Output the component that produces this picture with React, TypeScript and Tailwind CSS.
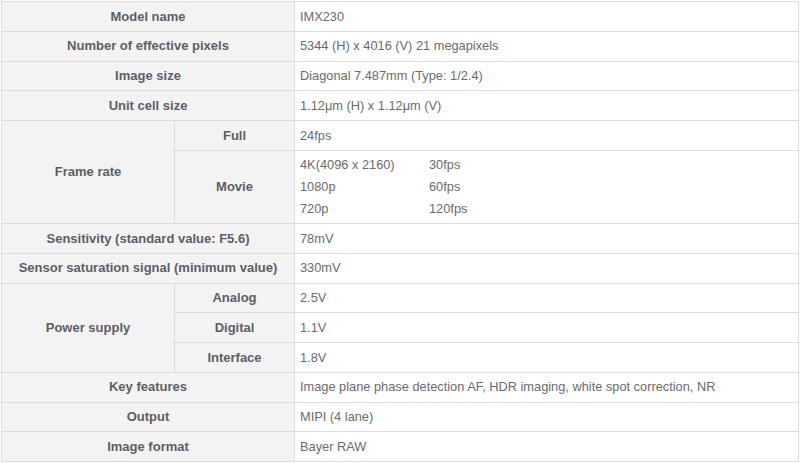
import React from 'react';

const th = 'border border-[#dddddd] bg-[#f3f3f3] text-center font-bold text-[#5e5e66] px-2 py-[3.5px]';
const td = 'border border-[#dddddd] bg-white text-left text-[#6b6b6b] text-[12.8px] px-[5px] py-[3.5px]';

const movie = [
  ['4K(4096 x 2160)', '30fps'],
  ['1080p', '60fps'],
  ['720p', '120fps'],
];

export default function App() {
  return (
    <div className="bg-white w-[800px] h-[463px] p-px font-['Liberation_Sans',Arial,sans-serif] text-[13px] leading-[21.77px]">
      <table className="w-[797px] table-fixed border-collapse">
        <colgroup>
          <col className="w-[173px]" />
          <col className="w-[120px]" />
          <col className="w-[504px]" />
        </colgroup>
        <tbody>
          <tr>
            <th colSpan={2} className={th}>Model name</th>
            <td className={td}>IMX230</td>
          </tr>
          <tr>
            <th colSpan={2} className={th}>Number of effective pixels</th>
            <td className={td}>5344 (H) x 4016 (V) 21 megapixels</td>
          </tr>
          <tr>
            <th colSpan={2} className={th}>Image size</th>
            <td className={td}>Diagonal 7.487mm (Type: 1/2.4)</td>
          </tr>
          <tr>
            <th colSpan={2} className={th}>Unit cell size</th>
            <td className={td}>1.12μm (H) x 1.12μm (V)</td>
          </tr>
          <tr>
            <th rowSpan={2} className={th}>Frame rate</th>
            <th className={th}>Full</th>
            <td className={td}>24fps</td>
          </tr>
          <tr>
            <th className={th}>Movie</th>
            <td className={td}>
              <div className="grid grid-cols-[129px_1fr]">
                {movie.map(([res, fps]) => (
                  <React.Fragment key={res}>
                    <span>{res}</span>
                    <span>{fps}</span>
                  </React.Fragment>
                ))}
              </div>
            </td>
          </tr>
          <tr>
            <th colSpan={2} className={th}>Sensitivity (standard value: F5.6)</th>
            <td className={td}>78mV</td>
          </tr>
          <tr>
            <th colSpan={2} className={th}>Sensor saturation signal (minimum value)</th>
            <td className={td}>330mV</td>
          </tr>
          <tr>
            <th rowSpan={3} className={th}>Power supply</th>
            <th className={th}>Analog</th>
            <td className={td}>2.5V</td>
          </tr>
          <tr>
            <th className={th}>Digital</th>
            <td className={td}>1.1V</td>
          </tr>
          <tr>
            <th className={th}>Interface</th>
            <td className={td}>1.8V</td>
          </tr>
          <tr>
            <th colSpan={2} className={th}>Key features</th>
            <td className={td}>Image plane phase detection AF, HDR imaging, white spot correction, NR</td>
          </tr>
          <tr>
            <th colSpan={2} className={th}>Output</th>
            <td className={td}>MIPI (4 lane)</td>
          </tr>
          <tr>
            <th colSpan={2} className={th}>Image format</th>
            <td className={td}>Bayer RAW</td>
          </tr>
        </tbody>
      </table>
    </div>
  );
}
